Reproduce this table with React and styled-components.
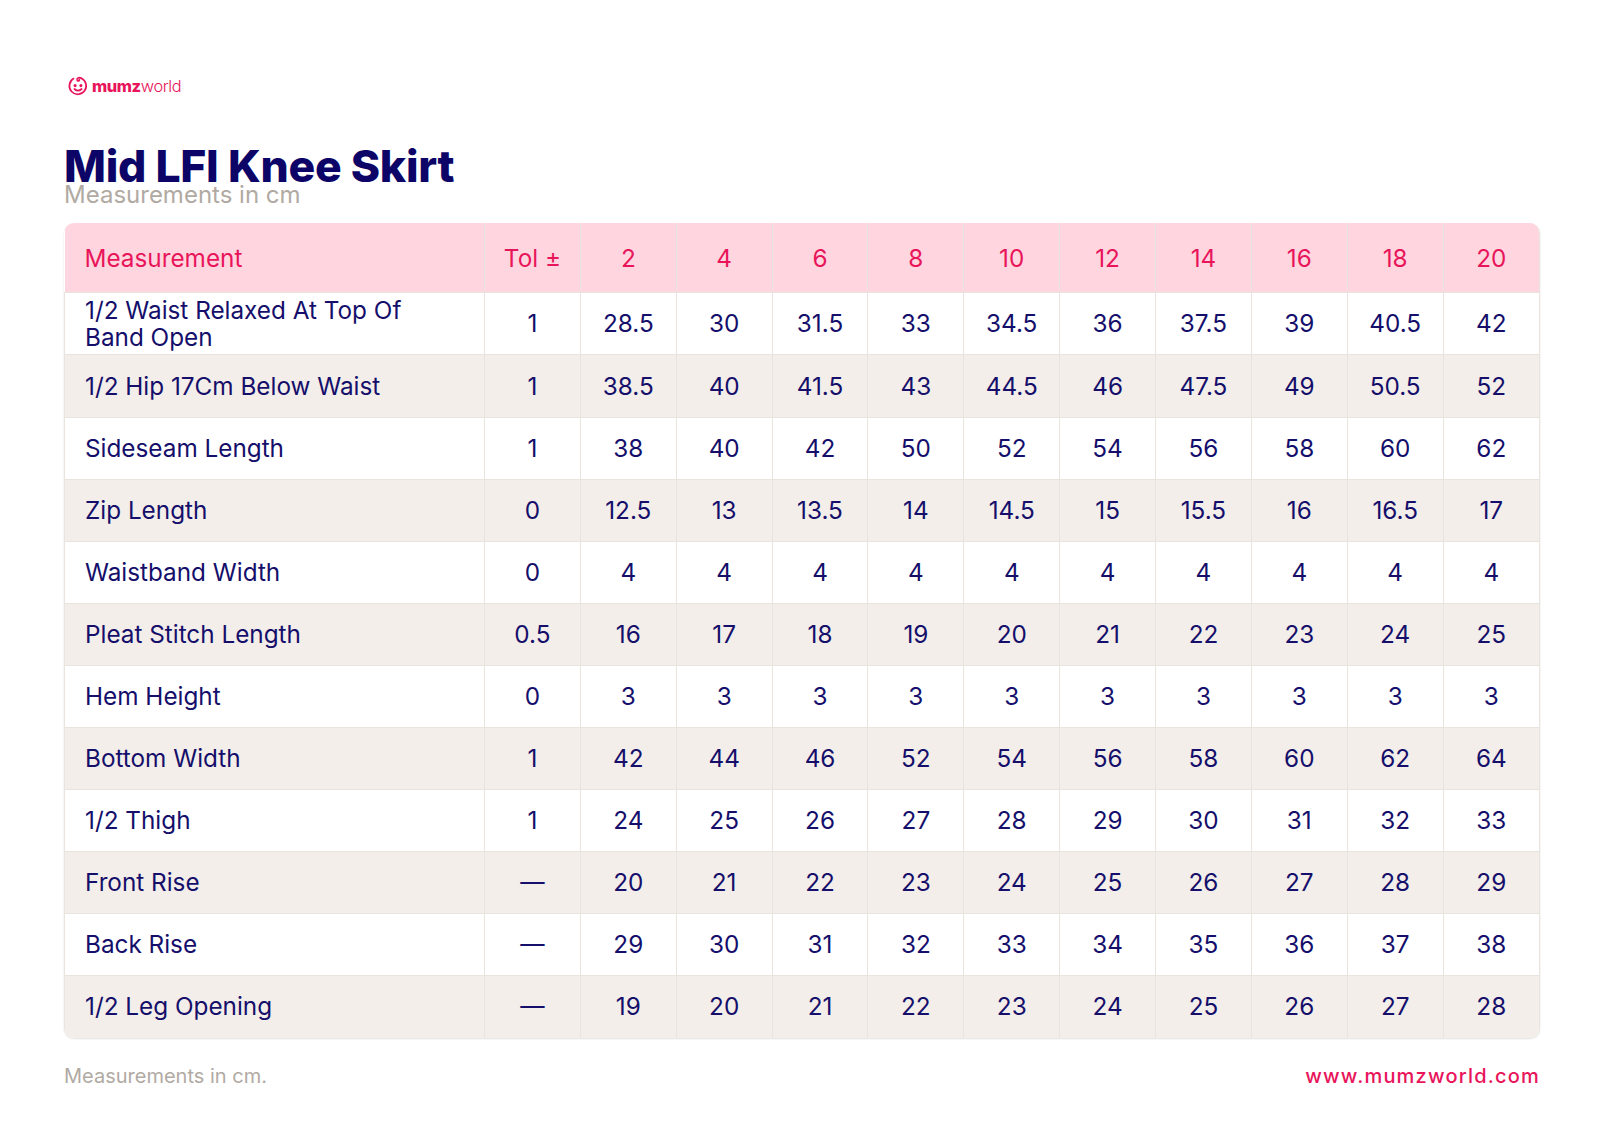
import React from 'react';
import styled, { createGlobalStyle } from 'styled-components';

const GlobalStyle = createGlobalStyle`
  html, body {
    margin: 0;
    padding: 0;
    background: #ffffff;
    font-family: 'Inter', 'Liberation Sans', sans-serif;
  }
`;

const colors = {
  navy: '#150f6b',
  title: '#0c0567',
  pink: '#e8155b',
  pinkBg: '#ffd6df',
  beige: '#f3eee9',
  line: '#e9e4de',
  grey: '#b1aaa3',
};

const sizes = ['2', '4', '6', '8', '10', '12', '14', '16', '18', '20'];

const rows = [
  { name: '1/2 Waist Relaxed At Top Of Band Open', tol: '1', values: ['28.5', '30', '31.5', '33', '34.5', '36', '37.5', '39', '40.5', '42'] },
  { name: '1/2 Hip 17Cm Below Waist', tol: '1', values: ['38.5', '40', '41.5', '43', '44.5', '46', '47.5', '49', '50.5', '52'] },
  { name: 'Sideseam Length', tol: '1', values: ['38', '40', '42', '50', '52', '54', '56', '58', '60', '62'] },
  { name: 'Zip Length', tol: '0', values: ['12.5', '13', '13.5', '14', '14.5', '15', '15.5', '16', '16.5', '17'] },
  { name: 'Waistband Width', tol: '0', values: ['4', '4', '4', '4', '4', '4', '4', '4', '4', '4'] },
  { name: 'Pleat Stitch Length', tol: '0.5', values: ['16', '17', '18', '19', '20', '21', '22', '23', '24', '25'] },
  { name: 'Hem Height', tol: '0', values: ['3', '3', '3', '3', '3', '3', '3', '3', '3', '3'] },
  { name: 'Bottom Width', tol: '1', values: ['42', '44', '46', '52', '54', '56', '58', '60', '62', '64'] },
  { name: '1/2 Thigh', tol: '1', values: ['24', '25', '26', '27', '28', '29', '30', '31', '32', '33'] },
  { name: 'Front Rise', tol: '—', values: ['20', '21', '22', '23', '24', '25', '26', '27', '28', '29'] },
  { name: 'Back Rise', tol: '—', values: ['29', '30', '31', '32', '33', '34', '35', '36', '37', '38'] },
  { name: '1/2 Leg Opening', tol: '—', values: ['19', '20', '21', '22', '23', '24', '25', '26', '27', '28'] },
];

const Page = styled.div`
  width: 1476px;
  margin-left: 64px;
  padding-top: 75px;
`;

const Logo = styled.div`
  display: flex;
  align-items: center;
  gap: 3px;
  margin-left: 3px;
  height: 22px;
  color: ${colors.pink};
  font-size: 16.4px;
  letter-spacing: -0.4px;
`;

const LogoBold = styled.span`
  font-weight: 800;
`;

const LogoLight = styled.span`
  font-weight: 300;
`;

const Title = styled.h1`
  margin: 45px 0 0;
  font-weight: 800;
  font-size: 44.5px;
  line-height: 48px;
  letter-spacing: -0.3px;
  color: ${colors.title};
`;

const Subtitle = styled.div`
  margin-top: -9px;
  font-size: 24px;
  line-height: 27px;
  color: ${colors.grey};
`;

const TableWrap = styled.div`
  margin-top: 15px;
  border-radius: 10px;
  overflow: hidden;
  box-shadow: 0 1px 2px rgba(0, 0, 0, 0.12);
  border-right: 1px solid ${colors.line};
`;

const Table = styled.table`
  width: 100%;
  border-collapse: collapse;
  table-layout: fixed;
  font-size: 24.3px;
`;

const HeadCell = styled.th`
  height: 69.4px;
  padding: 0;
  background: ${colors.pinkBg};
  color: ${colors.pink};
  font-weight: 400;
  text-align: ${(p) => (p.$left ? 'left' : 'center')};
  padding-left: ${(p) => (p.$left ? '20px' : '0')};
  border-left: ${(p) => (p.$left ? 'none' : `1px solid ${colors.line}`)};
`;

const Row = styled.tr`
  background: ${(p) => (p.$shade ? colors.beige : '#ffffff')};
  border-top: 1px solid ${colors.line};
`;

const Cell = styled.td`
  height: 61.1px;
  padding: 0;
  color: ${colors.navy};
  text-align: center;
  border-left: 1px solid ${colors.line};
  line-height: 27px;
`;

const NameCell = styled(Cell)`
  text-align: left;
  padding: 0 40px 0 20px;
`;

const Footer = styled.div`
  display: flex;
  justify-content: space-between;
  align-items: center;
  margin-top: 26px;
  font-size: 20px;
  line-height: 24px;
`;

const FootNote = styled.span`
  color: ${colors.grey};
`;

const Site = styled.span`
  color: ${colors.pink};
  letter-spacing: 1.2px;
  font-weight: 500;
`;

function LogoIcon() {
  return (
    <svg width="22" height="22" viewBox="0 0 22 22" fill="none" stroke={colors.pink} strokeWidth="1.7" strokeLinecap="round">
      <path d="M6.6 3.6 A8.4 8.4 0 1 0 14.2 3.2" />
      <path d="M14.2 3.2 C11.8 2 9.6 3.2 10.1 5 C10.6 6.6 12.8 6.1 12.3 4.5" />
      <circle cx="8.1" cy="10.6" r="0.7" fill={colors.pink} />
      <circle cx="13.9" cy="10.6" r="0.7" fill={colors.pink} />
      <path d="M7.4 14 Q11 17.2 14.6 14" />
    </svg>
  );
}

function App() {
  return (
    <>
      <GlobalStyle />
      <Page>
        <Logo>
          <LogoIcon />
          <span>
            <LogoBold>mumz</LogoBold>
            <LogoLight>world</LogoLight>
          </span>
        </Logo>
        <Title>Mid LFI Knee Skirt</Title>
        <Subtitle>Measurements in cm</Subtitle>
        <TableWrap>
          <Table>
            <colgroup>
              <col style={{ width: '420px' }} />
              <col />
              {sizes.map((s) => (
                <col key={s} />
              ))}
            </colgroup>
            <thead>
              <tr>
                <HeadCell $left>Measurement</HeadCell>
                <HeadCell>Tol ±</HeadCell>
                {sizes.map((s) => (
                  <HeadCell key={s}>{s}</HeadCell>
                ))}
              </tr>
            </thead>
            <tbody>
              {rows.map((r, i) => (
                <Row key={r.name} $shade={i % 2 === 1}>
                  <NameCell>{r.name}</NameCell>
                  <Cell>{r.tol}</Cell>
                  {r.values.map((v, j) => (
                    <Cell key={j}>{v}</Cell>
                  ))}
                </Row>
              ))}
            </tbody>
          </Table>
        </TableWrap>
        <Footer>
          <FootNote>Measurements in cm.</FootNote>
          <Site>www.mumzworld.com</Site>
        </Footer>
      </Page>
    </>
  );
}

export default App;
